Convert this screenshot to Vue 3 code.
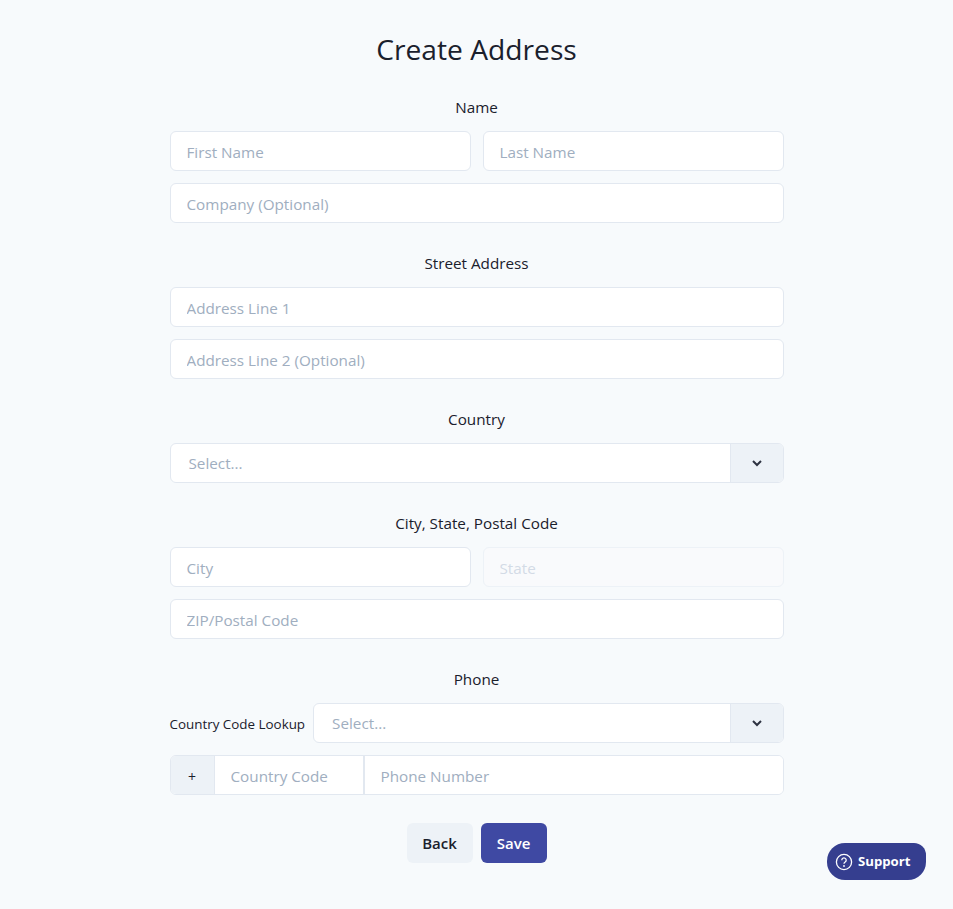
<script setup>
import { ref } from 'vue';

const first = ref('');
</script>

<template>
  <main class="page">
    <h1 class="title">Create Address</h1>

    <section class="group">
      <label class="group-label">Name</label>
      <div class="row">
        <input v-model="first" class="input" placeholder="First Name">
        <input class="input" placeholder="Last Name">
      </div>
      <input class="input" placeholder="Company (Optional)">
    </section>

    <section class="group">
      <label class="group-label">Street Address</label>
      <input class="input" placeholder="Address Line 1">
      <input class="input" placeholder="Address Line 2 (Optional)">
    </section>

    <section class="group">
      <label class="group-label">Country</label>
      <div class="select">
        <span class="select-value">Select...</span>
        <span class="select-arrow">
          <svg width="12" height="12" viewBox="0 0 12 12"><path d="M2 4 L6 8 L10 4" fill="none" stroke="#2e3342" stroke-width="2"/></svg>
        </span>
      </div>
    </section>

    <section class="group">
      <label class="group-label">City, State, Postal Code</label>
      <div class="row">
        <input class="input" placeholder="City">
        <input class="input" placeholder="State" disabled>
      </div>
      <input class="input" placeholder="ZIP/Postal Code">
    </section>

    <section class="group">
      <label class="group-label">Phone</label>
      <div class="lookup">
        <span class="lookup-label">Country Code Lookup</span>
        <div class="select">
          <span class="select-value">Select...</span>
          <span class="select-arrow">
            <svg width="12" height="12" viewBox="0 0 12 12"><path d="M2 4 L6 8 L10 4" fill="none" stroke="#2e3342" stroke-width="2"/></svg>
          </span>
        </div>
      </div>
      <div class="phone">
        <span class="phone-plus">+</span>
        <input class="phone-input code" placeholder="Country Code">
        <input class="phone-input number" placeholder="Phone Number">
      </div>
    </section>

    <div class="actions">
      <button class="btn">Back</button>
      <button class="btn primary">Save</button>
    </div>

    <button class="support">
      <svg width="18" height="18" viewBox="0 0 18 18">
        <circle cx="9" cy="9" r="7.6" fill="none" stroke="#fff" stroke-width="1.3"/>
        <path d="M6.8 7.2 A2.2 2.2 0 1 1 10.2 9 C9.4 9.5 9 9.9 9 10.8" fill="none" stroke="#fff" stroke-width="1.3"/>
        <circle cx="9" cy="13" r="0.9" fill="#fff"/>
      </svg>
      <span class="support-text">Support</span>
    </button>
  </main>
</template>

<style scoped>
.page {
  box-sizing: border-box;
  width: 614px;
  height: 909px;
  margin: 0 auto;
  padding-top: 29px;
  display: flex;
  flex-direction: column;
  font-family: "Open Sans", "Noto Sans", sans-serif;
  color: #1a202c;
}

.title {
  margin: 0 0 26px;
  font-size: 28.2px;
  line-height: 40px;
  font-weight: 400;
  text-align: center;
  color: #1a202c;
}

.group {
  display: flex;
  flex-direction: column;
  gap: 12px;
  margin-bottom: 28px;
}

.group-label {
  font-size: 15.25px;
  line-height: 24px;
  text-align: center;
}

.row {
  display: flex;
  gap: 12px;
}

.input {
  box-sizing: border-box;
  flex: none;
  min-width: 0;
  width: 100%;
  height: 40px;
  padding: 2px 16px 0;
  background: #fff;
  border: 1px solid #e2e8f0;
  border-radius: 6px;
  font: inherit;
  font-size: 15.25px;
  outline: none;
}

.row .input {
  flex: 1;
}

.input::placeholder,
.phone-input::placeholder {
  color: #a0aec0;
  opacity: 1;
}

.input:disabled {
  background: #f9fafc;
  border-color: #edf2f7;
}

.input:disabled::placeholder {
  color: #d3dbe6;
}

.select {
  box-sizing: border-box;
  flex: 1 0 40px;
  display: flex;
  align-items: stretch;
  height: 40px;
  background: #fff;
  border: 1px solid #e2e8f0;
  border-radius: 6px;
  overflow: hidden;
}

.select-value {
  flex: 1;
  padding: 1px 0 0 18px;
  font-size: 15.25px;
  line-height: 37px;
  color: #a0aec0;
}

.select-arrow {
  width: 52px;
  display: flex;
  align-items: center;
  justify-content: center;
  background: #edf2f7;
  border-left: 1px solid #e2e8f0;
}

.lookup {
  display: flex;
  align-items: center;
  gap: 8px;
}

.lookup-label {
  font-size: 13.4px;
  line-height: 20px;
  padding-top: 1px;
}

.phone {
  display: flex;
  height: 40px;
  box-sizing: border-box;
  background: #fff;
  border: 1px solid #e2e8f0;
  border-radius: 6px;
  overflow: hidden;
}

.phone-plus {
  width: 43px;
  background: #edf2f7;
  border-right: 1px solid #e2e8f0;
  text-align: center;
  font-size: 14px;
  line-height: 41px;
}

.phone-input {
  box-sizing: border-box;
  min-width: 0;
  border: 0;
  padding: 2px 16px 0;
  font: inherit;
  font-size: 15.25px;
  outline: none;
}

.code {
  width: 148px;
}

.number {
  flex: 1;
  border-left: 2px solid #e2e8f0;
}

.actions {
  display: flex;
  justify-content: center;
  gap: 8px;
}

.btn {
  height: 40px;
  width: 66px;
  padding: 0;
  background: #edf2f7;
  border: 0;
  border-radius: 6px;
  font: inherit;
  font-size: 15px;
  font-weight: 600;
  color: #1a202c;
}

.primary {
  background: #3f49a3;
  color: #fff;
}

.support {
  position: fixed;
  right: 27px;
  bottom: 29px;
  width: 99px;
  height: 37px;
  display: flex;
  align-items: center;
  gap: 5px;
  padding: 0 0 0 8px;
  background: #353e8f;
  border: 0;
  border-radius: 18px 12px 18px 18px;
  font: inherit;
  font-size: 13.2px;
  font-weight: 700;
  color: #fff;
}

.support-text {
  margin-top: -2px;
}
</style>

<style>
body {
  background: #f7fafc;
}
</style>
